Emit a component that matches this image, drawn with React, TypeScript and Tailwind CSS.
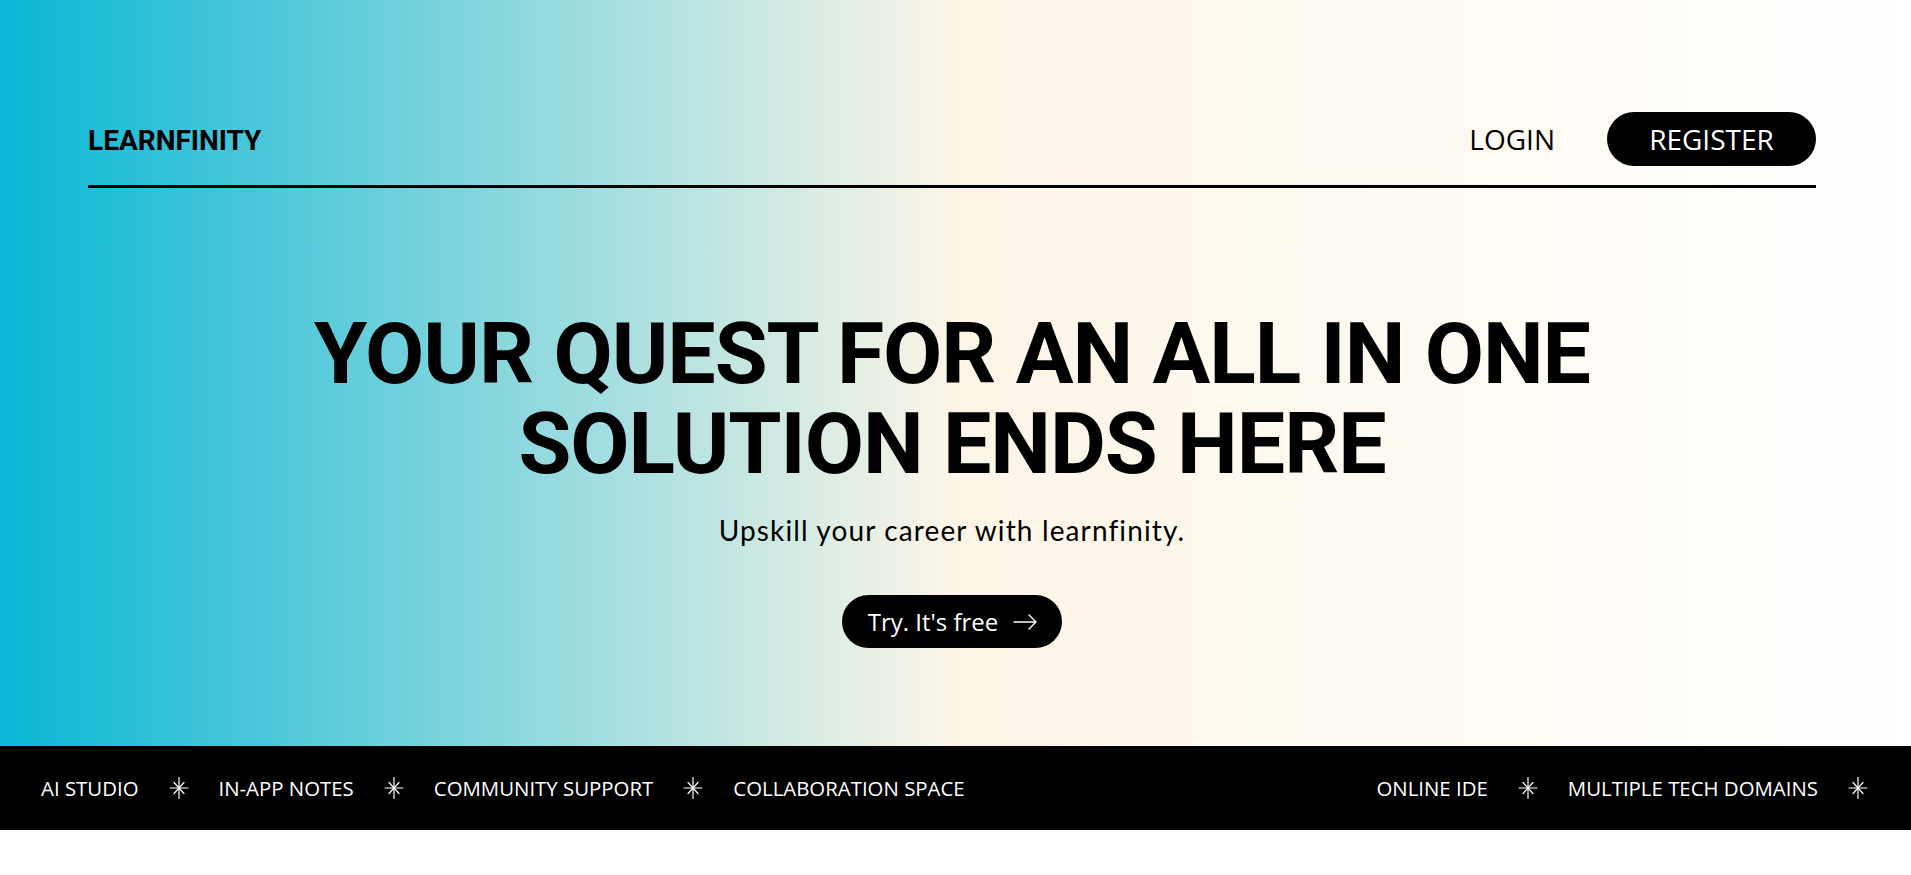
import React from 'react';

const sans = "font-['Open_Sans',sans-serif]";

function Spark() {
  return (
    <svg width="20" height="22" viewBox="0 0 20 22" className="shrink-0" stroke="white" strokeWidth="1.2" strokeLinecap="round">
      <line x1="10" y1="0.5" x2="10" y2="21.5" />
      <line x1="1" y1="11" x2="19" y2="11" />
      <line x1="5" y1="5.5" x2="15" y2="16.5" />
      <line x1="15" y1="5.5" x2="5" y2="16.5" />
    </svg>
  );
}

function Ticker({ items, trailing }: { items: string[]; trailing?: boolean }) {
  return (
    <div className="flex items-center gap-[30px]">
      {items.map((item, i) => (
        <React.Fragment key={item}>
          {i > 0 && <Spark />}
          <span className="whitespace-nowrap">{item}</span>
        </React.Fragment>
      ))}
      {trailing && <Spark />}
    </div>
  );
}

export default function App() {
  return (
    <div className="min-h-screen bg-white">
      <section className="h-[746px] bg-[linear-gradient(to_right,#08b6d5,#fdf5e6_50%,#ffffff)] pl-[88px] pr-[95px] pt-[112px]">
        <header className="flex h-[54px] items-center justify-between">
          <a className="mt-[3px] font-['Roboto',sans-serif] text-[28px] font-bold tracking-normal text-black">LEARNFINITY</a>
          <nav className={`flex items-center gap-[52px] ${sans} text-[28px] text-black`}>
            <a>LOGIN</a>
            <button className="h-[54px] w-[209px] rounded-full bg-black text-white">REGISTER</button>
          </nav>
        </header>
        <div className="mt-[19px] h-[3px] bg-black" />

        <div className="mt-[121px] flex flex-col items-center text-center">
          <h1 className="font-['Roboto',sans-serif] text-[86px] font-bold leading-[90px] tracking-[-0.012em] text-black">
            YOUR QUEST FOR AN ALL IN ONE
            <br />
            SOLUTION ENDS HERE
          </h1>
          <p className="mt-[20px] font-['Lato',sans-serif] text-[28px] tracking-[0.04em] text-black">
            Upskill your career with learnfinity.
          </p>
          <button className={`mt-[44px] flex h-[53px] items-center gap-[15px] rounded-full bg-black pl-[26px] pr-[24px] ${sans} text-[24px] text-white`}>
            Try. It's free
            <svg width="25" height="16" viewBox="0 0 25 16" fill="none" stroke="white" strokeWidth="1.4" strokeLinecap="round" strokeLinejoin="round">
              <path d="M1 8h22M16 1l7 7-7 7" />
            </svg>
          </button>
        </div>
      </section>

      <div className={`flex h-[84px] items-center justify-between bg-black pl-[41px] pr-[43px] ${sans} text-[20.4px] text-white`}>
        <Ticker items={['AI STUDIO', 'IN-APP NOTES', 'COMMUNITY SUPPORT', 'COLLABORATION SPACE']} />
        <Ticker items={['ONLINE IDE', 'MULTIPLE TECH DOMAINS']} trailing />
      </div>
    </div>
  );
}
